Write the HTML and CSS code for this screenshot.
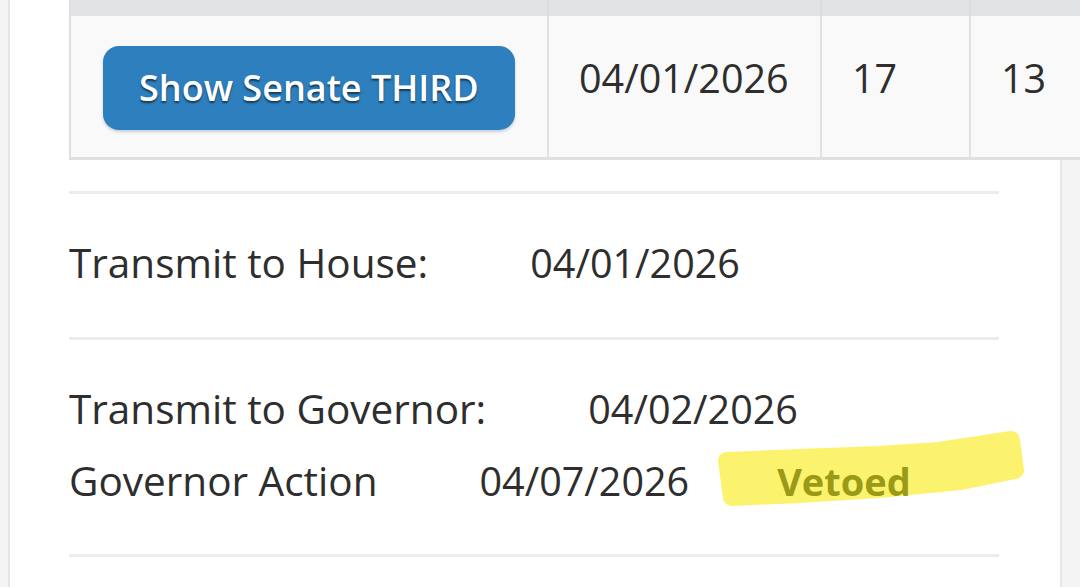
FILE: index.html
```html
<!DOCTYPE html>
<html lang="en">
<head>
<meta charset="utf-8">
<title>Bill status</title>
<link rel="stylesheet" href="styles.css">
</head>
<body>
<div class="panel">
  <table class="votes">
    <colgroup>
      <col class="c1"><col class="c2"><col class="c3"><col class="c4">
    </colgroup>
    <thead>
      <tr class="head"><th></th><th></th><th></th><th></th></tr>
    </thead>
    <tbody>
      <tr class="row">
        <td><a class="btn">Show Senate THIRD</a></td>
        <td>04/01/2026</td>
        <td>17</td>
        <td>13</td>
      </tr>
    </tbody>
  </table>

  <div class="section first">
    <div class="line"><span class="label">Transmit to House:</span><span class="date">04/01/2026</span></div>
  </div>
  <div class="section last">
    <div class="line"><span class="label">Transmit to Governor:</span><span class="date">04/02/2026</span></div>
    <div class="line action">
      <svg class="marker" width="420" height="110" viewBox="0 0 420 110" aria-hidden="true">
        <polygon points="28,41 100,38 180,35 240,31 280,25 312,20 316,50 262,61 180,69 100,74 33,77" fill="#fbf36e" stroke="#fbf36e" stroke-width="18" stroke-linejoin="round"/>
      </svg>
      <span class="label">Governor Action</span><span class="date">04/07/2026</span><span class="status">Vetoed</span>
    </div>
  </div>
</div>
</body>
</html>
```

FILE: styles.css
```css
html, body {
  margin: 0;
  padding: 0;
}
body {
  background: #f4f4f4;
  width: 1080px;
  height: 587px;
  overflow: hidden;
  font-family: "Open Sans", "Noto Sans", sans-serif;
  color: #2e2e2e;
}
.panel {
  margin-left: 8px;
  width: 1054px;
  min-height: 587px;
  background: #ffffff;
  border-left: 2px solid #e6e6e6;
  border-right: 2px solid #e6e6e6;
  padding-left: 59px;
  box-sizing: border-box;
}
.votes {
  border-collapse: collapse;
  table-layout: fixed;
  width: 1120px;
  border-left: 2px solid #e0e0e0;
  border-bottom: 3px solid #e0e0e0;
  margin-bottom: 31px;
}
.c1 { width: 478px; }
.c2 { width: 273px; }
.c3 { width: 149px; }
.c4 { width: 220px; }
.head th {
  height: 16px;
  padding: 0;
  background: #e2e3e5;
  border-right: 2px solid #dcdcdc;
}
.row td {
  height: 142px;
  box-sizing: border-box;
  padding: 0 0 16px 30px;
  background: #f9f9f9;
  border-right: 2px solid #e2e2e2;
  vertical-align: middle;
  font-size: 39.5px;
  line-height: 1;
}
.row td:first-child {
  padding: 4px 0 0 32px;
}
.btn {
  display: inline-block;
  height: 84px;
  line-height: 84px;
  padding: 0 36px;
  border-radius: 16px;
  background: #2d7fbe;
  color: #ffffff;
  font-size: 36px;
  font-weight: 600;
  text-shadow: 0 2px 2px rgba(0, 0, 0, 0.55);
  box-shadow: 0 2px 3px rgba(40, 90, 140, 0.25);
  vertical-align: middle;
}
.section {
  width: 930px;
  border-top: 3px solid #ececec;
  padding: 33px 0 37px;
}
.section.first {
  padding-bottom: 38px;
}
.section.last {
  border-bottom: 3px solid #ececec;
}
.line {
  font-size: 40.5px;
  line-height: 72px;
  white-space: nowrap;
}
.date {
  font-size: 39.5px;
}
.label + .date {
  margin-left: 102px;
}
.action {
  position: relative;
}
.marker {
  position: absolute;
  left: 630px;
  top: -25px;
  z-index: 0;
}
.action .label,
.action .date {
  position: relative;
  z-index: 1;
}
.status {
  position: relative;
  z-index: 1;
  margin-left: 88px;
  font-size: 38px;
  font-weight: 700;
  color: #9b9a18;
}
```
